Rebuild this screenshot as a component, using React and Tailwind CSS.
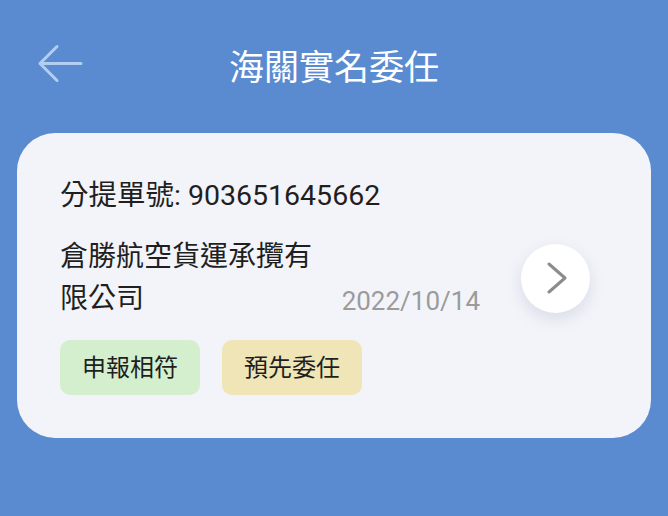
import React from "react";

const font = { fontFamily: "Roboto, 'Noto Sans CJK TC', sans-serif" };

function BackArrow() {
  return (
    <svg width="46" height="39" viewBox="0 0 46 39" fill="none" aria-hidden>
      <path d="M44 19.5H3M20 2.5L3 19.5L20 36.5" stroke="#b2cff2" strokeWidth="3" strokeLinecap="round" strokeLinejoin="round" />
    </svg>
  );
}

function Chevron() {
  return (
    <svg width="22" height="32" viewBox="0 0 22 32" fill="none" aria-hidden>
      <path d="M3 2L19 16L3 30" stroke="#8c8c8c" strokeWidth="3" strokeLinecap="round" strokeLinejoin="round" />
    </svg>
  );
}

export default function App() {
  return (
    <div className="w-[668px] h-[516px] bg-[#5a8bd0] flex flex-col overflow-hidden" style={font}>
      {/* header */}
      <div className="grid grid-cols-[110px_1fr_110px] items-center h-[133px]">
        <div className="pl-[37px] pb-[6px] flex items-center">
          <BackArrow />
        </div>
        <h1 className="text-center text-white text-[35px] leading-[44px] pt-[5px]">海關實名委任</h1>
        <div />
      </div>

      {/* card */}
      <div className="mx-[17px] h-[305px] rounded-[38px] bg-[#f3f4f9] pl-[43px] pr-[61px] pt-[43px] text-[#1f1f1f]">
        <p className="text-[28.5px] leading-[40px]">分提單號: 903651645662</p>

        <div className="mt-[20px] flex items-center">
          <div className="flex-1 flex items-end">
            <p className="w-[270px] text-[28px] leading-[42px]">倉勝航空貨運承攬有限公司</p>
            <span className="ml-auto text-[26px] leading-[34px] mb-[2px] text-[#9b9b9b]">2022/10/14</span>
          </div>
          <div className="ml-[41px] w-[69px] h-[69px] rounded-full bg-white shadow-[0_6px_16px_rgba(80,100,150,0.16)] flex items-center justify-center pl-[3px]">
            <Chevron />
          </div>
        </div>

        <div className="mt-[20px] flex gap-[22px]">
          <span className="h-[55px] px-[22px] rounded-[10px] bg-[#d4efce] text-[24px] flex items-center">申報相符</span>
          <span className="h-[55px] px-[22px] rounded-[10px] bg-[#efe5b6] text-[24px] flex items-center">預先委任</span>
        </div>
      </div>
    </div>
  );
}
